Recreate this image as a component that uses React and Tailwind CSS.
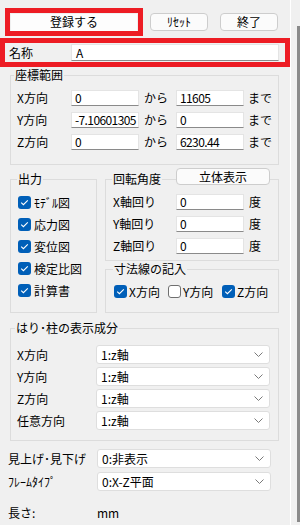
import React from "react";

const Check = ({ checked }) =>
  checked ? (
    <span className="w-[13px] h-[13px] rounded-[3px] bg-[#005fb8] flex items-center justify-center shrink-0">
      <svg width="9" height="7" viewBox="0 0 9 7">
        <path d="M1.2 3.6 L3.4 5.7 L7.8 1.3" fill="none" stroke="white" strokeWidth="1.1" />
      </svg>
    </span>
  ) : (
    <span className="w-[13px] h-[13px] rounded-[3px] bg-white border border-[#6f6f6f] shrink-0" />
  );

const TextBox = ({ value, w = "w-[68px]" }) => (
  <div className={`${w} h-[16px] bg-white border border-[#e4e4e4] border-b-[#8a8a8a] pl-[3px] flex items-center leading-none tracking-[-0.6px] overflow-hidden whitespace-nowrap`}>
    {value}
  </div>
);

const Select = ({ value }) => (
  <div className="w-[174px] h-[19px] bg-white border border-[#dedede] rounded-[3px] flex items-center justify-between pl-[4px] pr-[6px] leading-none">
    <span>{value}</span>
    <svg width="9" height="5" viewBox="0 0 9 5">
      <path d="M0.5 0.5 L4.5 4.5 L8.5 0.5" fill="none" stroke="#7a7a7a" strokeWidth="1" />
    </svg>
  </div>
);

const Legend = ({ children, ml }) => (
  <legend className={`${ml} px-[1px] h-[16px] leading-[16px] whitespace-nowrap`}>{children}</legend>
);

const Btn = ({ children, cls }) => (
  <div className={`${cls} h-[18px] bg-[#fbfbfb] border border-[#cdcdcd] rounded-[4px] flex items-center justify-center leading-none`}>
    {children}
  </div>
);

export default function App() {
  return (
    <div className="w-[300px] h-[525px] bg-[#f0f0f0] flex overflow-hidden font-['Noto_Sans_CJK_JP',sans-serif] text-[12px] text-black">
      <div className="w-[290px] flex flex-col">
        {/* top buttons */}
        <div className="flex items-center mt-[8px] ml-[5px] h-[28px]">
          <div className="w-[138px] h-[28px] border-[5px] border-[#ed1c24] flex items-center justify-center">
            <div className="w-[126px] h-[17px] bg-[#fdfdfd] flex items-center justify-center leading-none">登録する</div>
          </div>
          <Btn cls="ml-[7px] w-[58px]">ﾘｾｯﾄ</Btn>
          <Btn cls="ml-[12px] w-[58px]">終了</Btn>
        </div>

        {/* name */}
        <div className="mt-[2px] w-[290px] h-[29px] border-[5px] border-[#ed1c24] flex items-center pl-[4px]">
          <span className="w-[62px] leading-none">名称</span>
          <div className="w-[208px] h-[17px] bg-white border border-[#e4e4e4] border-b-[#8a8a8a] pl-[4px] flex items-center leading-none">A</div>
        </div>

        {/* 座標範囲 */}
        <fieldset className="ml-[10px] w-[269px] border border-[#dcdcdc]">
          <Legend ml="ml-[3px]">座標範囲</Legend>
          <div className="flex flex-col gap-[6px] pt-[7px] pb-[14px] pl-[6px]">
            {[
              ["X方向", "0", "11605"],
              ["Y方向", "-7.10601305", "0"],
              ["Z方向", "0", "6230.44"],
            ].map(([l, a, b]) => (
              <div key={l} className="flex items-center h-[16px]">
                <span className="w-[54px] leading-none">{l}</span>
                <TextBox value={a} />
                <span className="w-[37px] pl-[5px] leading-none">から</span>
                <TextBox value={b} />
                <span className="pl-[4px] leading-none">まで</span>
              </div>
            ))}
          </div>
        </fieldset>

        {/* middle */}
        <div className="flex mt-[6px] ml-[10px]">
          <fieldset className="w-[87px] border border-[#dcdcdc]">
            <Legend ml="ml-[6px]">出力</Legend>
            <div className="flex flex-col gap-[9px] pt-[9px] pb-[15px] pl-[7px]">
              {["ﾓﾃﾞﾙ図", "応力図", "変位図", "検定比図", "計算書"].map((t) => (
                <div key={t} className="flex items-center h-[13px] gap-[3px]">
                  <Check checked />
                  <span className="leading-none whitespace-nowrap">{t}</span>
                </div>
              ))}
            </div>
          </fieldset>

          <div className="ml-[8px] w-[174px] flex flex-col">
            <div className="relative">
              <fieldset className="w-[174px] border border-[#dcdcdc]">
                <Legend ml="ml-[6px]">回転角度</Legend>
                <div className="flex flex-col gap-[6px] pt-[7px] pb-[6px] pl-[7px]">
                  {["X軸回り", "Y軸回り", "Z軸回り"].map((l) => (
                    <div key={l} className="flex items-center h-[16px]">
                      <span className="w-[63px] leading-none">{l}</span>
                      <TextBox value="0" />
                      <span className="pl-[5px] leading-none">度</span>
                    </div>
                  ))}
                </div>
              </fieldset>
              <Btn cls="absolute top-[-3px] left-[71px] w-[94px] !h-[17px]">立体表示</Btn>
            </div>

            <fieldset className="w-[174px] border border-[#dcdcdc]">
              <Legend ml="ml-[7px]">寸法線の記入</Legend>
              <div className="flex items-center h-[13px] mt-[8px] mb-[14px] pl-[8px]">
                {[
                  ["X方向", true],
                  ["Y方向", false],
                  ["Z方向", true],
                ].map(([t, c]) => (
                  <div key={t} className="w-[54px] flex items-center gap-[2px]">
                    <Check checked={c} />
                    <span className="leading-none">{t}</span>
                  </div>
                ))}
              </div>
            </fieldset>
          </div>
        </div>

        {/* はり・柱 */}
        <fieldset className="mt-[7px] ml-[10px] w-[269px] border border-[#dcdcdc]">
          <Legend ml="ml-[4px]">はり･柱の表示成分</Legend>
          <div className="flex flex-col gap-[3px] pt-[9px] pb-[10px] pl-[6px]">
            {["X方向", "Y方向", "Z方向", "任意方向"].map((l) => (
              <div key={l} className="flex items-center">
                <span className="w-[79px] leading-none">{l}</span>
                <Select value="1:z軸" />
              </div>
            ))}
          </div>
        </fieldset>

        <div className="mt-[8px] flex flex-col gap-[4px] pl-[8px]">
          <div className="flex items-center">
            <span className="w-[89px] leading-none whitespace-nowrap">見上げ･見下げ</span>
            <Select value="0:非表示" />
          </div>
          <div className="flex items-center">
            <span className="w-[89px] leading-none whitespace-nowrap">ﾌﾚｰﾑﾀｲﾌﾟ</span>
            <Select value="0:X-Z平面" />
          </div>
        </div>

        <div className="mt-[14px] h-[16px] flex items-center pl-[8px]">
          <span className="w-[89px] leading-none">長さ:</span>
          <span className="leading-none">mm</span>
        </div>
      </div>
      <div className="w-px bg-white" />
      <div className="w-[6px]" />
      <div className="w-[3px] pt-[26px] pb-[3px] flex flex-col">
        <div className="flex-1 bg-[#8a8a8a]" />
      </div>
    </div>
  );
}
